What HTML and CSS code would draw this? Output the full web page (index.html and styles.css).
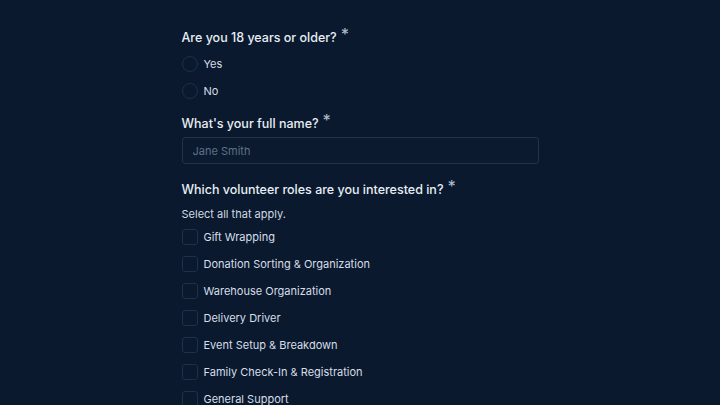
FILE: index.html
```html
<!DOCTYPE html>
<html lang="en">
<head>
    <meta charset="UTF-8">
    <meta name="viewport" content="width=device-width, initial-scale=1.0">
    <title>Volunteer Sign-Up</title>
    <link rel="stylesheet" href="styles.css">
</head>
<body>

    <form class="form" id="volunteerForm">
        <!-- age -->
        <div class="question">
            <div class="title">Are you 18 years or older?<span class="req">*</span></div>
            <label class="option"><input type="radio" name="adult" value="yes"><span>Yes</span></label>
            <label class="option"><input type="radio" name="adult" value="no"><span>No</span></label>
        </div>

        <!-- name -->
        <div class="question question-text">
            <div class="title">What's your full name?<span class="req">*</span></div>
            <input type="text" class="text-input" name="full_name" placeholder="Jane Smith">
        </div>

        <!-- roles -->
        <div class="question">
            <div class="title">Which volunteer roles are you interested in?<span class="req">*</span></div>
            <p class="hint">Select all that apply.</p>
            <label class="option"><input type="checkbox" name="roles" value="gift"><span>Gift Wrapping</span></label>
            <label class="option"><input type="checkbox" name="roles" value="sorting"><span>Donation Sorting &amp; Organization</span></label>
            <label class="option"><input type="checkbox" name="roles" value="warehouse"><span>Warehouse Organization</span></label>
            <label class="option"><input type="checkbox" name="roles" value="driver"><span>Delivery Driver</span></label>
            <label class="option"><input type="checkbox" name="roles" value="event"><span>Event Setup &amp; Breakdown</span></label>
            <label class="option"><input type="checkbox" name="roles" value="checkin"><span>Family Check-In &amp; Registration</span></label>
            <label class="option"><input type="checkbox" name="roles" value="general"><span>General Support</span></label>
        </div>
    </form>

</body>
</html>
```

FILE: styles.css
```css
html, body {
    margin: 0;
    background-color: #0a192e;
}
body {
    font-family: Inter, "Noto Sans", sans-serif;
    color: #e4ebf2;
    padding-top: 28px;
    height: 405px;
    box-sizing: border-box;
    overflow: hidden;
}
.form {
    width: 357px;
    margin: 0 auto;
}
.question {
    margin-bottom: 15px;
}
.question-text {
    margin-bottom: 16px;
}
.title {
    font-size: 12.5px;
    font-weight: 500;
    line-height: 20px;
    color: #e8eef4;
    margin-bottom: 8px;
}
.req {
    font-size: 16px;
    line-height: 0;
    vertical-align: 2px;
    color: #a9b7c6;
    margin-left: 4px;
}
.hint {
    font-size: 11px;
    line-height: 16px;
    color: #d0d9e2;
    margin: -2px 0 7px;
}
.option {
    display: flex;
    align-items: center;
    height: 16px;
    margin-bottom: 11px;
    font-size: 11px;
    color: #d6dee7;
    cursor: pointer;
}
.option input {
    appearance: none;
    -webkit-appearance: none;
    width: 16px;
    height: 16px;
    margin: 0 6px 0 0;
    border: 1px solid #1e3147;
    background-color: #0a192e;
    flex-shrink: 0;
}
.option input[type="radio"] {
    border-radius: 50%;
}
.option input[type="checkbox"] {
    border-radius: 3px;
}
.text-input {
    display: block;
    width: 100%;
    height: 27px;
    box-sizing: border-box;
    margin: -5px 0 0;
    padding: 0 10px;
    border: 1px solid #1d3546;
    border-radius: 3px;
    background-color: #0b1a2e;
    color: #e4ebf2;
    font-family: inherit;
    font-size: 11px;
}
.text-input::placeholder {
    color: #5d7186;
}
```
